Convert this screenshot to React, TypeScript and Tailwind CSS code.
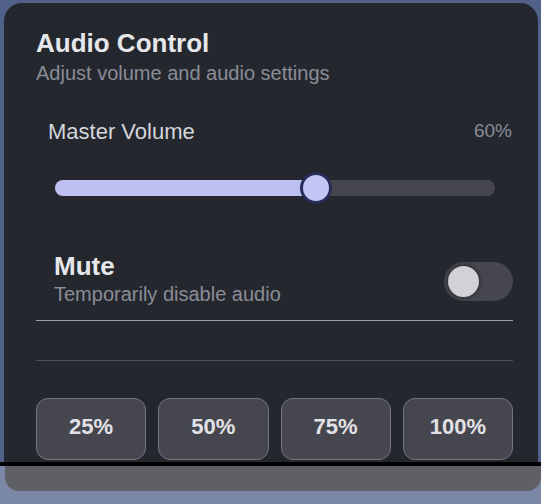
import { useState } from 'react';

const PRESETS = [25, 50, 75, 100];

export default function App() {
  const [volume, setVolume] = useState(60);
  const [muted, setMuted] = useState(false);

  // thumb stays inside the track, like radix sliders
  const pos = `calc(${volume}% + ${16 - volume * 0.32}px)`;

  return (
    <div className="flex h-[504px] w-[541px] flex-col overflow-hidden bg-[#51618a] font-['Liberation_Sans',Arial,sans-serif]">
      {/* Card */}
      <div className="ml-[4px] mr-[3px] mt-[3px] h-[459px] shrink-0 overflow-hidden rounded-t-[18px] bg-[#25272f] pl-[32px] pr-[25px] pt-[24px]">
        <h2 className="text-[26px] font-bold leading-[32px] text-[#e6e7ea]">Audio Control</h2>
        <p className="text-[20px] leading-[28px] text-[#8a8d96]">Adjust volume and audio settings</p>

        {/* Volume */}
        <div className="mt-[30px] flex h-[28px] items-center justify-between pl-[12px] pr-[1px]">
          <span className="text-[22px] text-[#d4d6db]">Master Volume</span>
          <span className="text-[19px] text-[#8a8d96]">{volume}%</span>
        </div>
        <div className="mt-[27px] flex h-[32px] items-center pl-[19px] pr-[18px]">
          <div className="relative h-[16px] w-full rounded-full bg-[#45464e]">
            <div className="h-full rounded-full bg-[#bdc0f0]" style={{ width: pos }} />
            <div
              className="absolute top-1/2 h-[32px] w-[32px] -translate-x-1/2 -translate-y-1/2 rounded-full border-[3px] border-[#272c5a] bg-[#c3c5f4]"
              style={{ left: pos }}
            />
          </div>
        </div>

        {/* Mute */}
        <div className="mt-[47px] flex h-[56px] items-start justify-between pl-[18px]">
          <div>
            <div className="text-[26px] font-bold leading-[30px] text-[#e6e7ea]">Mute</div>
            <div className="text-[20px] leading-[26px] text-[#8a8d96]">Temporarily disable audio</div>
          </div>
          <button
            onClick={() => setMuted(!muted)}
            className="mt-[11px] flex h-[39px] w-[69px] items-center rounded-full bg-[#45464e] px-[4px]"
          >
            <span
              className={`h-[31px] w-[31px] rounded-full bg-[#d2d2d6] shadow-[0_0_3px_2px_rgba(0,0,0,0.25)] ${muted ? 'ml-auto' : ''}`}
            />
          </button>
        </div>

        <div className="mt-[13px] h-px bg-[#9c9ea6]" />
        <div className="mt-[39px] h-px bg-[#4c4e56]" />

        {/* Presets */}
        <div className="mt-[37px] grid grid-cols-4 gap-[12px]">
          {PRESETS.map((p) => (
            <button
              key={p}
              onClick={() => setVolume(p)}
              className="h-[62px] rounded-[12px] border-[1.5px] border-[#75767d] bg-[#46464f] pb-[6px] text-[22px] font-bold text-[#e2e2e6]"
            >
              {p}%
            </button>
          ))}
        </div>
      </div>

      {/* Lower edge */}
      <div className="h-[4px] shrink-0 bg-black" />
      <div className="flex-1 bg-[#7b88a5]">
        <div className="ml-[5px] h-[25px] rounded-b-[14px] bg-[#5f6066]" />
      </div>
    </div>
  );
}
